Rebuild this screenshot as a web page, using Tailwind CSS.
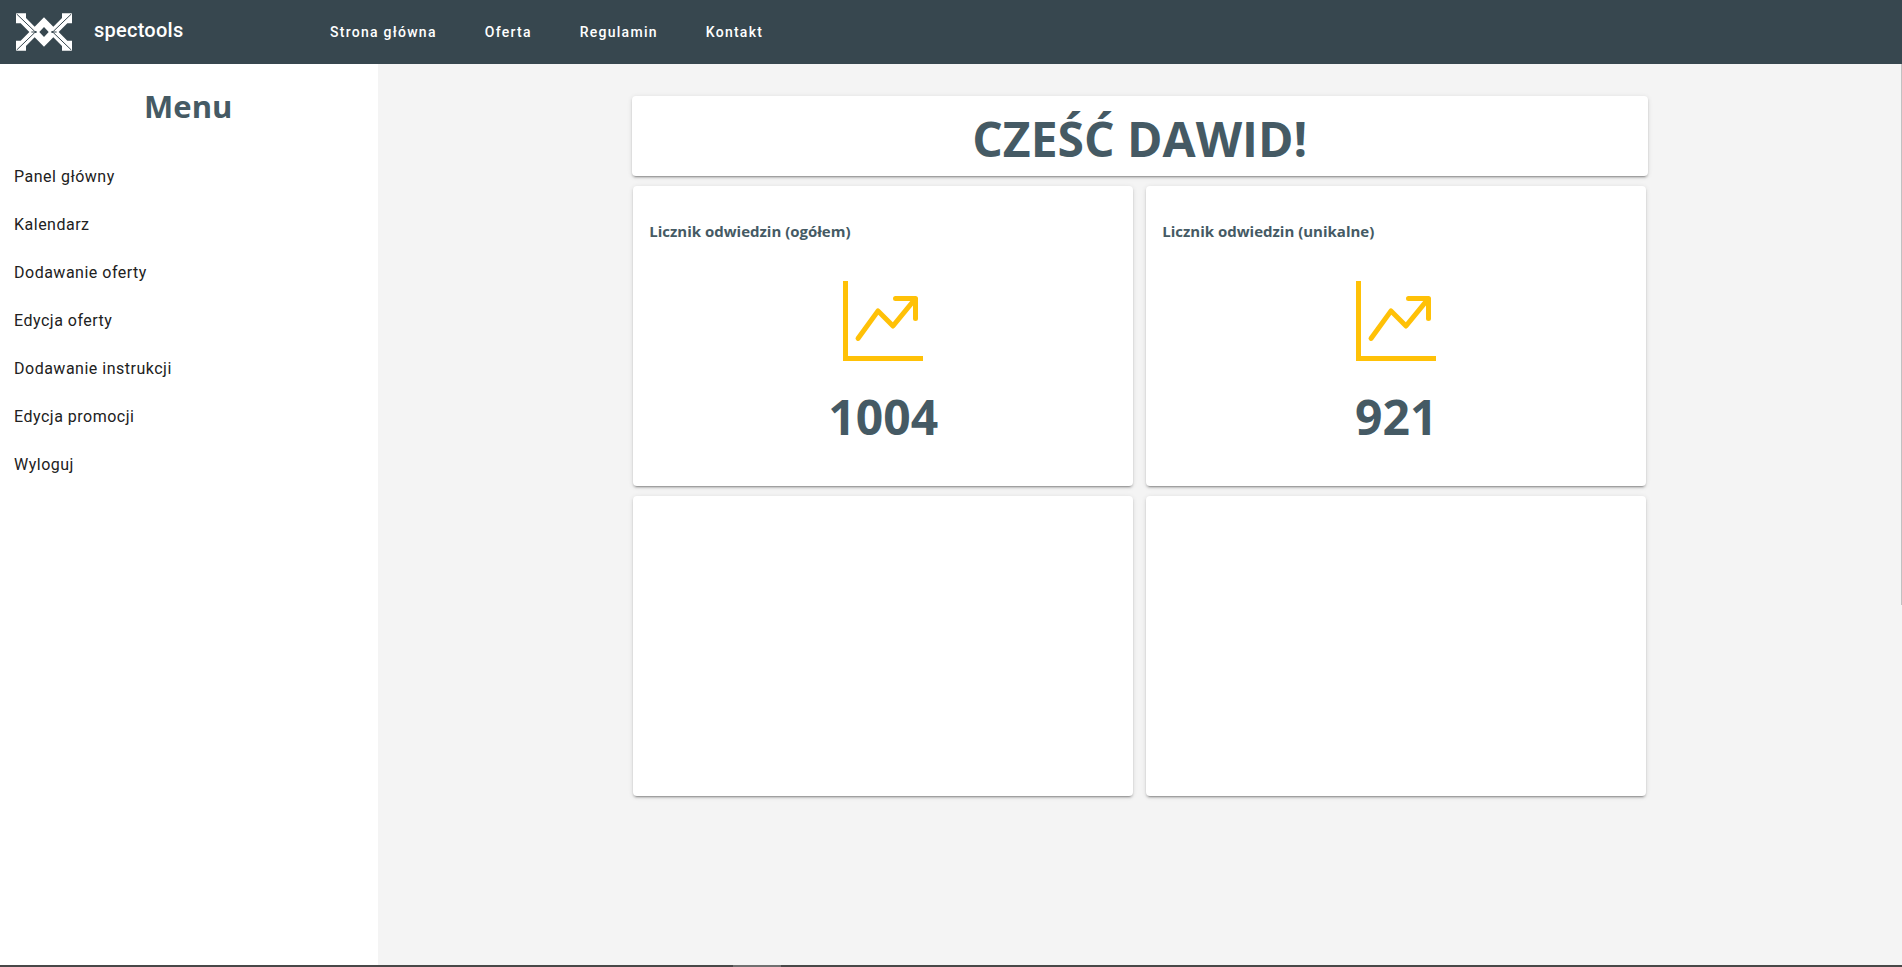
<!DOCTYPE html>
<html lang="pl">
<head>
<meta charset="utf-8">
<title>spectools</title>
<meta name="viewport" content="width=device-width, initial-scale=1">
<script src="https://cdn.jsdelivr.net/npm/@tailwindcss/browser@4"></script>
</head>
<body class="flex h-screen flex-col overflow-hidden bg-[#f4f4f4] font-['Roboto',sans-serif]">
<header class="flex h-16 shrink-0 items-center bg-[#37474f] text-white">
  <a href="#" class="flex w-[306px] items-center gap-[21px] pl-[15px] text-xl font-medium tracking-[0.0125em]">
    <svg class="h-[38px] w-[58px] shrink-0" viewBox="-3 -1 174 114" aria-hidden="true">
      <path d="M0 0H30V14L56 40L84 12L112 40L138 14V0H168V30H154L128 56L154 82H168V112H138V98L112 72L84 100L56 72L30 98V112H0V82H14L40 56L14 30H0Z" fill="#fff"/>
      <path d="M84 41L98 56L84 71L70 56Z" fill="#37474f"/>
      <path d="M2 2L56 54L62 56L56 58L2 110M166 2L112 54L106 56L112 58L166 110M46 56H60M122 56H108" fill="none" stroke="#37474f" stroke-width="3"/>
    </svg>
    <span class="pb-1">spectools</span>
  </a>
  <nav class="flex text-sm font-medium tracking-[0.09em]">
    <a href="#" class="px-6">Strona główna</a>
    <a href="#" class="px-6">Oferta</a>
    <a href="#" class="px-6">Regulamin</a>
    <a href="#" class="px-6">Kontakt</a>
  </nav>
</header>
<div class="flex min-h-0 grow">
  <aside class="w-[19.9%] shrink-0 bg-white">
    <h2 class="pt-5 pr-0.5 text-center font-['Open_Sans',sans-serif] text-[31px] leading-[45px] font-bold text-[#455a64]">Menu</h2>
    <nav class="mt-6 flex flex-col text-base leading-6 tracking-[0.5px] text-[#212121]">
      <a href="#" class="px-3.5 py-3">Panel główny</a>
      <a href="#" class="px-3.5 py-3">Kalendarz</a>
      <a href="#" class="px-3.5 py-3">Dodawanie oferty</a>
      <a href="#" class="px-3.5 py-3">Edycja oferty</a>
      <a href="#" class="px-3.5 py-3">Dodawanie instrukcji</a>
      <a href="#" class="px-3.5 py-3">Edycja promocji</a>
      <a href="#" class="px-3.5 py-3">Wyloguj</a>
    </nav>
  </aside>
  <main class="flex min-w-0 grow flex-col items-center pt-8 font-['Open_Sans',sans-serif] text-[#455a64]">
    <h1 class="flex h-20 w-full max-w-[1016px] items-center justify-center rounded bg-white pt-1.5 text-5xl font-bold shadow-[0_3px_1px_-2px_rgba(0,0,0,0.2),0_2px_2px_0_rgba(0,0,0,0.14),0_1px_5px_0_rgba(0,0,0,0.12)]">CZEŚĆ DAWID!</h1>
    <div class="mt-2.5 grid w-full max-w-[1013px] grid-cols-2 gap-x-[13px] gap-y-2.5">
      <section class="flex h-[300px] flex-col items-center rounded bg-white px-4 pt-[33px] shadow-[0_3px_1px_-2px_rgba(0,0,0,0.2),0_2px_2px_0_rgba(0,0,0,0.14),0_1px_5px_0_rgba(0,0,0,0.12)]">
        <h2 class="w-full text-[15px] leading-6 font-bold">Licznik odwiedzin (ogółem)</h2>
        <svg class="mt-[38px] size-20" viewBox="0 0 16 16" fill="#ffc107" aria-hidden="true"><path d="M0 0h1v15h15v1H0V0Zm10 3.5a.5.5 0 0 1 .5-.5h4a.5.5 0 0 1 .5.5v4a.5.5 0 0 1-1 0V4.9l-3.613 4.417a.5.5 0 0 1-.74.037L7.06 6.767l-3.656 5.027a.5.5 0 0 1-.808-.588l4-5.5a.5.5 0 0 1 .758-.06l2.609 2.61L13.445 4H10.5a.5.5 0 0 1-.5-.5Z"/></svg>
        <p class="mt-6 text-5xl leading-16 font-bold">1004</p>
      </section>
      <section class="flex h-[300px] flex-col items-center rounded bg-white px-4 pt-[33px] shadow-[0_3px_1px_-2px_rgba(0,0,0,0.2),0_2px_2px_0_rgba(0,0,0,0.14),0_1px_5px_0_rgba(0,0,0,0.12)]">
        <h2 class="w-full text-[15px] leading-6 font-bold">Licznik odwiedzin (unikalne)</h2>
        <svg class="mt-[38px] size-20" viewBox="0 0 16 16" fill="#ffc107" aria-hidden="true"><path d="M0 0h1v15h15v1H0V0Zm10 3.5a.5.5 0 0 1 .5-.5h4a.5.5 0 0 1 .5.5v4a.5.5 0 0 1-1 0V4.9l-3.613 4.417a.5.5 0 0 1-.74.037L7.06 6.767l-3.656 5.027a.5.5 0 0 1-.808-.588l4-5.5a.5.5 0 0 1 .758-.06l2.609 2.61L13.445 4H10.5a.5.5 0 0 1-.5-.5Z"/></svg>
        <p class="mt-6 text-5xl leading-16 font-bold">921</p>
      </section>
      <section class="h-[300px] rounded bg-white shadow-[0_3px_1px_-2px_rgba(0,0,0,0.2),0_2px_2px_0_rgba(0,0,0,0.14),0_1px_5px_0_rgba(0,0,0,0.12)]"></section>
      <section class="h-[300px] rounded bg-white shadow-[0_3px_1px_-2px_rgba(0,0,0,0.2),0_2px_2px_0_rgba(0,0,0,0.14),0_1px_5px_0_rgba(0,0,0,0.12)]"></section>
    </div>
  </main>
  <div class="w-px shrink-0"><div class="h-3/5 bg-[#c1c1c1]"></div></div>
</div>
<div class="flex h-0.5 shrink-0 bg-[#484848]"><div class="ml-[733px] w-12 bg-[#707070]"></div></div>
</body>
</html>
